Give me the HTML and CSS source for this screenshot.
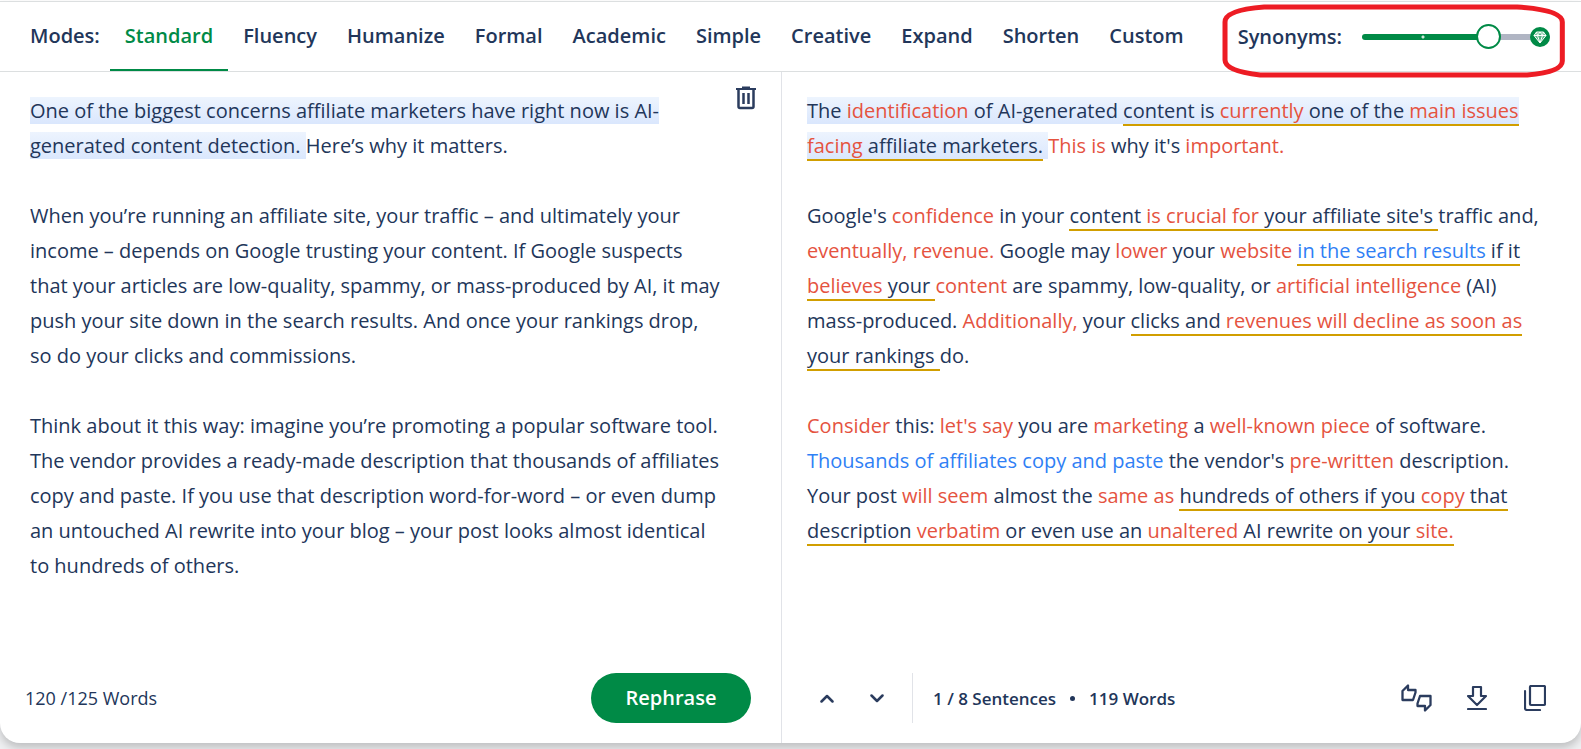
FILE: index.html
```
<!DOCTYPE html>
<html lang="en">
<head>
    <meta charset="UTF-8">
    <meta name="viewport" content="width=device-width, initial-scale=1.0">
    <title>Paraphraser</title>
    <link rel="stylesheet" href="styles.css">
</head>
<body>
    <main class="card">
        <header class="toolbar">
            <span class="modes-label">Modes:</span>
            <nav class="modes">
                <button class="mode active">Standard</button>
                <button class="mode">Fluency</button>
                <button class="mode">Humanize</button>
                <button class="mode">Formal</button>
                <button class="mode">Academic</button>
                <button class="mode">Simple</button>
                <button class="mode">Creative</button>
                <button class="mode">Expand</button>
                <button class="mode">Shorten</button>
                <button class="mode">Custom</button>
            </nav>
            <div class="synonyms">
                <label for="synonyms">Synonyms:</label>
                <div class="slider">
                    <input type="range" id="synonyms" min="0" max="100" value="70">
                    <svg class="diamond" viewBox="0 0 20 20">
                        <circle cx="10" cy="10" r="10" fill="#008a46"/>
                        <path d="M6.500 5h7L16 8.500 10 16 4 8.500z" fill="#fff" fill-opacity="0.35"/>
                        <path d="M6.500 5h7L16 8.500 10 16 4 8.500z M4 8.500h12 M7.500 8.500L10 16l2.500-7.500 M6.500 5l1 3.500L10 5l2.500 3.500 1-3.500" fill="none" stroke="#fff" stroke-width="1" stroke-linejoin="round"/>
                    </svg>
                </div>
                <!-- red marker around the slider -->
                <svg class="marker" viewBox="0 0 342 74" preserveAspectRatio="none">
                    <path d="M42 3H294Q339 6 339 18V57Q339 68 304 71H38Q3 67 3 56V18Q3 6 42 3z" fill="none" stroke="#ed1c24" stroke-width="5"/>
                </svg>
            </div>
        </header>

        <div class="panels">
            <section class="panel input-panel">
                <button class="icon-btn trash" aria-label="Delete text">
                    <svg width="20" height="24" viewBox="0 0 20 24" fill="none" stroke="#2b3c5e">
                        <path d="M0 3h20" stroke-width="2"/>
                        <path d="M6 1.500h8" stroke-width="2"/>
                        <path d="M2.500 3v17.500a1.500 1.500 0 0 0 1.500 1.500h12a1.500 1.500 0 0 0 1.500-1.500V3" stroke-width="2.500"/>
                        <path d="M7.500 7v11M12.500 7v11" stroke-width="2.500"/>
                    </svg>
                </button>
                <div class="text" contenteditable="true" spellcheck="false">
                    <p><span class="hl">One of the biggest concerns affiliate marketers have right now is AI-generated content detection. </span>Here’s why it matters.</p>
                    <p>When you’re running an affiliate site, your traffic – and ultimately your income – depends on Google trusting your content. If Google suspects that your articles are low-quality, spammy, or mass-produced by AI, it may push your site down in the search results. And once your rankings drop, so do your clicks and commissions.</p>
                    <p>Think about it this way: imagine you’re promoting a popular software tool. The vendor provides a ready-made description that thousands of affiliates copy and paste. If you use that description word-for-word – or even dump an untouched AI rewrite into your blog – your post looks almost identical to hundreds of others.</p>
                </div>
                <footer class="bar">
                    <span class="count">120 /125 Words</span>
                    <button class="rephrase">Rephrase</button>
                </footer>
            </section>

            <section class="panel output-panel">
                <div class="text">
                    <p><span class="hl">The <b>identification</b> of AI-generated <u>content is <b>currently</b> one of the <b>main issues facing</b> affiliate marketers.</u> </span><b>This is</b> why it's <b>important.</b></p>
                    <p>Google's <b>confidence</b> in your <u>content <b>is crucial for</b> your affiliate site's </u>traffic and, <b>eventually, revenue.</b> Google may <b>lower</b> your <b>website</b> <u><i>in the search results</i> if it <b>believes</b> your </u><b>content</b> are spammy, low-quality, or <b>artificial intelligence</b> (AI) mass-produced. <b>Additionally,</b> your <u>clicks and <b>revenues will decline as soon as</b> your rankings </u>do.</p>
                    <p><b>Consider</b> this: <b>let's say</b> you are <b>marketing</b> a <b>well-known piece</b> of software. <i>Thousands of affiliates copy and paste</i> the vendor's <b>pre-written</b> description. Your post <b>will seem</b> almost the <b>same as</b> <u>hundreds of others if you <b>copy</b> that description <b>verbatim</b> or even use an <b>unaltered</b> AI rewrite on your <b>site.</b></u></p>
                </div>
                <footer class="bar">
                    <div class="pager">
                        <button class="icon-btn" aria-label="Previous sentence">
                            <svg width="14" height="9" viewBox="0 0 14 9" fill="none" stroke="#2b3c5e" stroke-width="2.500" stroke-linecap="round" stroke-linejoin="round"><path d="M1.500 7.500L7 2l5.500 5.500"/></svg>
                        </button>
                        <button class="icon-btn" aria-label="Next sentence">
                            <svg width="14" height="9" viewBox="0 0 14 9" fill="none" stroke="#2b3c5e" stroke-width="2.500" stroke-linecap="round" stroke-linejoin="round"><path d="M1.500 1.500L7 7l5.500-5.500"/></svg>
                        </button>
                    </div>
                    <div class="stats">
                        <span>1 / 8 Sentences</span>
                        <span class="dot"></span>
                        <span>119 Words</span>
                    </div>
                    <div class="actions">
                        <button class="icon-btn" aria-label="Feedback">
                            <svg width="32" height="28" viewBox="0 0 32 28" fill="none" stroke="#2b3c5e" stroke-width="2.300" stroke-linejoin="round">
                                <path d="M2.500 7L8 1.500V6H15.500V8.500L13 16H2.500z"/>
                                <path d="M30.500 21L25 26.500V22H17.500V19.500L20 12H30.500z"/>
                            </svg>
                        </button>
                        <button class="icon-btn" aria-label="Download">
                            <svg width="20" height="26" viewBox="0 0 20 26" fill="none" stroke="#2b3c5e" stroke-width="2.200" stroke-linecap="round" stroke-linejoin="round">
                                <path d="M6 2h8v9h5l-9 9-9-9h5z"/>
                                <path d="M1 24h18"/>
                            </svg>
                        </button>
                        <button class="icon-btn" aria-label="Copy">
                            <svg width="22" height="26" viewBox="0 0 22 26" fill="none" stroke="#2b3c5e" stroke-width="2.200" stroke-linecap="round" stroke-linejoin="round">
                                <rect x="6" y="1" width="15" height="19" rx="1"/>
                                <path d="M1 6v17a2 2 0 0 0 2 2h13"/>
                            </svg>
                        </button>
                    </div>
                </footer>
            </section>
        </div>
    </main>
</body>
</html>
```
FILE: styles.css
```
* {
    box-sizing: border-box;
}

body {
    margin: 0;
    padding: 1px 0 6px;
    min-height: 100vh;
    display: flex;
    flex-direction: column;
    font-family: 'Open Sans', sans-serif;
    font-size: 20px;
    color: #22365a;
    background: linear-gradient(#fff 50%, #eff0f2 50%);
}

button {
    font: inherit;
    color: inherit;
    border: none;
    background: none;
    padding: 0;
    cursor: pointer;
}

svg {
    display: block;
}

.card {
    flex: 1;
    display: flex;
    flex-direction: column;
    background: #fff;
    border-top: 1px solid #dcdfe0;
    border-radius: 0 0 20px 20px;
    box-shadow: 0 5px 8px rgba(0, 0, 0, 0.2);
}

/* toolbar */
.toolbar {
    display: flex;
    align-items: stretch;
    height: 70px;
    padding: 0 31px 0 30px;
    border-bottom: 1px solid #dcdfe0;
    line-height: 67px;
    font-weight: 600;
}

.modes-label {
    margin-right: 10px;
}

.modes {
    display: flex;
}

.mode {
    padding: 0 15px;
    border-bottom: 2px solid transparent;
}

.mode.active {
    color: #008a46;
    border-color: #008a46;
}

.synonyms {
    position: relative;
    display: flex;
    align-items: center;
    gap: 20px;
    margin-left: auto;
}

.slider {
    position: relative;
    display: flex;
    align-items: center;
    width: 188px;
}

.slider input {
    appearance: none;
    width: 100%;
    height: 26px;
    margin: 0;
    background: none;
}

.slider input::-webkit-slider-runnable-track {
    height: 6px;
    border-radius: 3px;
    background:
        radial-gradient(circle at 61px 3px, #cfe8da 1px, transparent 2px),
        linear-gradient(90deg, #008a46 67%, #b0b5c3 67%);
}

.slider input::-webkit-slider-thumb {
    appearance: none;
    width: 25px;
    height: 25px;
    margin-top: -10px;
    border: 2px solid #008a46;
    border-radius: 50%;
    background: #fff;
}

.diamond {
    position: absolute;
    right: 0;
    width: 20px;
    height: 20px;
}

.marker {
    position: absolute;
    top: 2px;
    left: -16px;
    width: calc(100% + 31px);
    height: 74px;
    pointer-events: none;
}

/* panels */
.panels {
    flex: 1;
    display: grid;
    grid-template-columns: minmax(0, 782fr) minmax(0, 799fr);
}

.panel {
    position: relative;
    display: flex;
    flex-direction: column;
}

.input-panel {
    border-right: 1px solid #e1e3e8;
}

.text {
    flex: 1;
    padding: 21px 60px 35px 30px;
    line-height: 35px;
    outline: none;
}

.output-panel .text {
    padding: 21px 35px 35px 25px;
}

.text p {
    margin: 0 0 35px;
}

.hl {
    background: linear-gradient(#edf4fe, #dae7fd);
    box-decoration-break: clone;
    -webkit-box-decoration-break: clone;
}

.text b {
    font-weight: 400;
    color: #e5533f;
}

.text i {
    font-style: normal;
    color: #2f80f5;
}

.text u {
    text-decoration: none;
    border-bottom: 2px solid #d19e00;
}

.trash {
    position: absolute;
    top: 14px;
    right: 25px;
}

/* bottom bars */
.bar {
    display: flex;
    align-items: center;
    height: 50px;
    margin-bottom: 20px;
    font-size: 18px;
}

.input-panel .bar {
    justify-content: space-between;
    padding: 0 30px 0 25px;
}

.rephrase {
    width: 160px;
    height: 50px;
    padding-bottom: 2px;
    border-radius: 25px;
    background: #008a46;
    color: #fff;
    font-size: 20px;
    font-weight: 600;
}

.output-panel .bar {
    padding: 0 35px 0 38px;
}

.pager {
    display: flex;
    align-items: center;
    gap: 36px;
    height: 100%;
    padding-right: 28px;
    border-right: 1px solid #e1e3e8;
}

.stats {
    display: flex;
    align-items: center;
    gap: 14px;
    margin-left: 20px;
    font-size: 17px;
    font-weight: 600;
}

.dot {
    width: 5px;
    height: 5px;
    border-radius: 50%;
    background: #22365a;
}

.actions {
    display: flex;
    align-items: center;
    gap: 37px;
    margin-left: auto;
}

.actions .icon-btn:first-child {
    margin-right: -2px;
}
```
